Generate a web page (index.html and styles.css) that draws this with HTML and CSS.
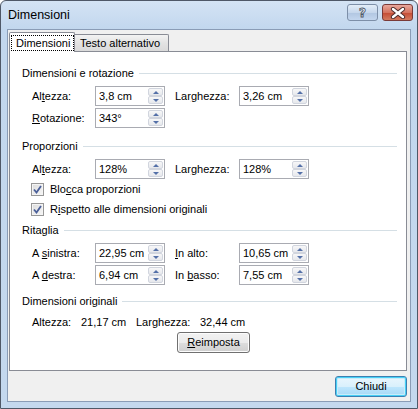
FILE: index.html
```html
<!DOCTYPE html>
<html lang="it">
<head>
<meta charset="utf-8">
<title>Dimensioni</title>
<link rel="stylesheet" href="styles.css">
</head>
<body>
<div class="window">
  <div class="titlebar">
    <span class="title">Dimensioni</span>
    <div class="capbtns">
      <div class="capbtn help"><span class="qmark">?</span></div>
      <div class="capbtn close">
        <svg width="16" height="12" viewBox="0 0 16 12">
          <path d="M3 2 L13 10 M13 2 L3 10" stroke="#4a2a2a" stroke-width="4.2" stroke-linecap="round" fill="none"/>
          <path d="M3 2 L13 10 M13 2 L3 10" stroke="#ffffff" stroke-width="2.4" stroke-linecap="round" fill="none"/>
        </svg>
      </div>
    </div>
  </div>
  <div class="client">
    <div class="tabs">
      <div class="tab active"><span class="focus">Dimensioni</span></div>
      <div class="tab">Testo alternativo</div>
    </div>
    <div class="panel">
      <div class="group-h g1"><span>Dimensioni e rotazione</span></div>
      <div class="row first">
        <span class="lbl">Al<u>t</u>ezza:</span>
        <div class="spin"><span class="val">3,8 cm</span><span class="arrows"><i class="up"></i><i class="dn"></i></span></div>
        <span class="lbl lbl2">Lar<u>g</u>hezza:</span>
        <div class="spin"><span class="val">3,26 cm</span><span class="arrows"><i class="up"></i><i class="dn"></i></span></div>
      </div>
      <div class="row">
        <span class="lbl"><u>R</u>otazione:</span>
        <div class="spin"><span class="val">343°</span><span class="arrows"><i class="up"></i><i class="dn"></i></span></div>
      </div>

      <div class="group-h g2"><span>Proporzioni</span></div>
      <div class="row first">
        <span class="lbl">Al<u>t</u>ezza:</span>
        <div class="spin"><span class="val">128%</span><span class="arrows"><i class="up"></i><i class="dn"></i></span></div>
        <span class="lbl lbl2">Lar<u>g</u>hezza:</span>
        <div class="spin"><span class="val">128%</span><span class="arrows"><i class="up"></i><i class="dn"></i></span></div>
      </div>
      <div class="check">
        <span class="box"><svg width="9" height="9" viewBox="0 0 9 9"><path d="M1 4.5 L3.5 7.5 L8 1" stroke="#4a5f99" stroke-width="1.8" fill="none"/></svg></span>
        <span>Blo<u>c</u>ca proporzioni</span>
      </div>
      <div class="check">
        <span class="box"><svg width="9" height="9" viewBox="0 0 9 9"><path d="M1 4.5 L3.5 7.5 L8 1" stroke="#4a5f99" stroke-width="1.8" fill="none"/></svg></span>
        <span>R<u>i</u>spetto alle dimensioni originali</span>
      </div>

      <div class="group-h g3"><span>Ritaglia</span></div>
      <div class="row first">
        <span class="lbl">A <u>s</u>inistra:</span>
        <div class="spin"><span class="val">22,95 cm</span><span class="arrows"><i class="up"></i><i class="dn"></i></span></div>
        <span class="lbl lbl2"><u>I</u>n alto:</span>
        <div class="spin"><span class="val">10,65 cm</span><span class="arrows"><i class="up"></i><i class="dn"></i></span></div>
      </div>
      <div class="row">
        <span class="lbl">A <u>d</u>estra:</span>
        <div class="spin"><span class="val">6,94 cm</span><span class="arrows"><i class="up"></i><i class="dn"></i></span></div>
        <span class="lbl lbl2">In <u>b</u>asso:</span>
        <div class="spin"><span class="val">7,55 cm</span><span class="arrows"><i class="up"></i><i class="dn"></i></span></div>
      </div>

      <div class="group-h g4"><span>Dimensioni originali</span></div>
      <div class="orig">
        <span class="o-l1">Altezza:</span>
        <span class="o-v1">21,17 cm</span>
        <span class="o-l2">Larghezza:</span>
        <span>32,44 cm</span>
      </div>
      <div class="btnrow">
        <div class="btn reset"><u>R</u>eimposta</div>
      </div>
    </div>
    <div class="footer">
      <div class="btn default">Chiudi</div>
    </div>
  </div>
</div>
</body>
</html>
```

FILE: styles.css
```css
* { box-sizing: border-box; }
html, body { margin: 0; padding: 0; }
body {
  width: 418px;
  height: 409px;
  font-family: "Liberation Sans", Arial, sans-serif;
  font-size: 11px;
  color: #000;
  background: #ffffff;
  overflow: hidden;
}
u { text-decoration: underline; text-underline-offset: 1px; }

.window {
  width: 418px;
  height: 409px;
  border: 1px solid #4f5867;
  border-radius: 6px 6px 0 0;
  background: linear-gradient(#d4e3f4 0px, #c2d7ee 28px, #c4d8ee 100%);
  padding: 0 6px 6px;
  display: flex;
  flex-direction: column;
}

.titlebar {
  height: 28px;
  margin: 0 -6px;
  padding: 0 4px 0 7px;
  display: flex;
  align-items: flex-start;
  justify-content: space-between;
}
.title {
  font-size: 12.5px;
  line-height: 14px;
  margin-top: 7px;
  color: #000;
}
.capbtns { display: flex; gap: 4px; margin-top: 3px; }
.capbtn {
  width: 31px;
  height: 17px;
  border-radius: 3px;
  display: flex;
  align-items: center;
  justify-content: center;
}
.help {
  border: 1px solid #7d8fa8;
  background: linear-gradient(#e3edf8 0%, #c6d7ec 50%, #b1c6e1 51%, #c3d6ee 100%);
}
.qmark {
  font-family: "DejaVu Sans", sans-serif;
  font-weight: bold;
  font-size: 12px;
  line-height: 12px;
  color: #ffffff;
  -webkit-text-stroke: 0.9px #4d5869;
}
.close {
  border: 1px solid #7a3a38;
  background: linear-gradient(#e8a79d 0%, #d5735f 50%, #c44a33 51%, #d37a5f 100%);
}

.client {
  flex: 1;
  border: 1px solid #8a9cb6;
  background: #f0f0f0;
  padding: 2px 3px 0 1px;
  display: flex;
  flex-direction: column;
}

.tabs {
  display: flex;
  align-items: flex-end;
  margin-bottom: -1px;
  position: relative;
  z-index: 1;
}
.tab {
  height: 17px;
  width: 94px;
  margin-bottom: 1px;
  border: 1px solid #898c95;
  border-left: 0;
  border-bottom: 0;
  border-radius: 0 2px 0 0;
  background: linear-gradient(#f3f3f3, #e3e3e3 50%, #dadada);
  padding-left: 5px;
  line-height: 16px;
}
.tab.active {
  width: 66px;
  height: 20px;
  margin-bottom: 0;
  border-left: 1px solid #898c95;
  border-radius: 2px 2px 0 0;
  background: #ffffff;
  padding: 2px 0 0 1px;
  line-height: 14px;
}
.focus {
  display: inline-block;
  border: 1px dotted #000;
  padding: 0 3px 0 4px;
  height: 16px;
  line-height: 14px;
}

.panel {
  margin-left: 0;
  height: 320px;
  border: 1px solid #898c95;
  background: #ffffff;
  padding: 14px 9px 0 12px;
  display: flex;
  flex-direction: column;
}

.group-h {
  display: flex;
  align-items: center;
  height: 14px;
  line-height: 14px;
}
.group-h::after {
  content: "";
  flex: 1;
  height: 1px;
  background: #d5dfe5;
  margin-left: 5px;
}
.g2 { margin-top: 11px; }
.g3 { margin-top: 4px; }
.g4 { margin-top: 9px; }

.row {
  display: flex;
  align-items: center;
  height: 20px;
  margin-top: 2px;
  padding-left: 10px;
}
.row.first { margin-top: 6px; }
.lbl { width: 63px; }
.lbl2 { width: 64px; margin-left: 10px; }

.spin {
  width: 70px;
  height: 20px;
  border: 1px solid #a9abb2;
  background: #fff;
  display: flex;
  align-items: stretch;
  padding: 1px;
}
.val {
  flex: 1;
  padding-left: 2px;
  line-height: 16px;
}
.arrows {
  width: 15px;
  display: flex;
  flex-direction: column;
  gap: 0;
}
.arrows i {
  flex: 1;
  position: relative;
  border: 1px solid #d1d5de;
  border-radius: 2px;
  background: linear-gradient(#f7f7f8, #e6e8ec);
}
.arrows i::after {
  content: "";
  position: absolute;
  left: 4px;
  width: 0;
  height: 0;
  border-left: 3px solid transparent;
  border-right: 3px solid transparent;
}
.arrows .up::after { top: 2px; border-bottom: 3px solid #5470a8; }
.arrows .dn::after { top: 2px; border-top: 3px solid #5470a8; }

.check {
  display: flex;
  align-items: center;
  height: 20px;
  padding-left: 9px;
}
.box {
  width: 13px;
  height: 13px;
  border: 1px solid #979797;
  background: linear-gradient(135deg, #dcdcdc, #f6f6f6);
  padding: 1px;
  margin-right: 6px;
  display: flex;
  align-items: center;
  justify-content: center;
  box-shadow: inset 0 0 0 1px #f4f4f4;
}
.box svg { display: block; }

.orig {
  display: flex;
  align-items: center;
  height: 14px;
  margin-top: 7px;
  padding-left: 10px;
}
.o-l1 { width: 49px; }
.o-v1 { width: 55px; }
.o-l2 { width: 64px; }

.btnrow {
  display: flex;
  margin-top: 3px;
  padding-left: 155px;
}
.btn {
  height: 21px;
  border: 1px solid #707070;
  border-radius: 3px;
  background: linear-gradient(#f2f2f2 0%, #ebebeb 50%, #dddddd 51%, #cfcfcf 100%);
  box-shadow: inset 0 0 0 1px #fcfcfc;
  text-align: center;
  line-height: 19px;
}
.reset { width: 73px; }

.footer {
  display: flex;
  justify-content: flex-end;
  margin-top: 5px;
}
.default {
  width: 72px;
  border-color: #3c7fb1;
  box-shadow: inset 0 0 0 1px #48d0f6, inset 0 0 0 2px #c9ecfa;
  background: linear-gradient(#eaf6fd 0%, #d9f0fc 50%, #bee6fd 51%, #a7d9f5 100%);
}
```
